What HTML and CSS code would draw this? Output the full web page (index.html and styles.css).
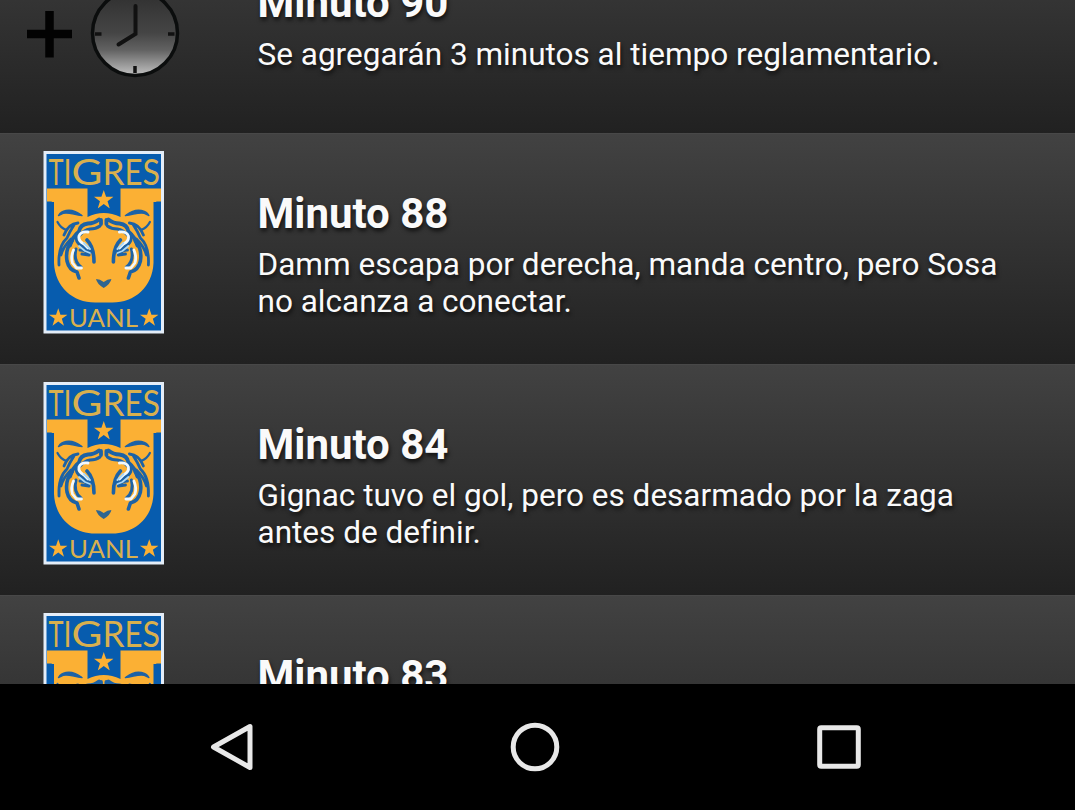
FILE: index.html
```html
<!DOCTYPE html>
<html lang="es">
<head>
<meta charset="utf-8">
<title>Minuto a minuto</title>
<link rel="stylesheet" href="styles.css">
</head>
<body>
<svg class="defs" aria-hidden="true">
  <symbol id="star" viewBox="0 0 20 19"><path d="M10 0l2.4 7H20l-6.1 4.5L16.2 19 10 14.5 3.8 19l2.3-7.5L0 7h7.6z"/></symbol>
  <g id="half-face" fill="none" stroke="#1c62a6" stroke-width="2.8" stroke-linecap="round" stroke-linejoin="round">
    <path d="M58.500 215.500C60 213 63 211 66 210.500c7-1 11 1.500 16 5-7-.5-10-2.500-16-2.500-4 0-5 1.500-7.500 2.500z" fill="#1c62a6" stroke-width="1.400"/>
    <path d="M57.500 222q3 6 9 8" stroke-width="2.200"/>
    <path d="M78 223q-10 1-14 12M74 225q-4 6-7 13-9 8-8 27M71 239q-8 8-10 16"/>
    <path d="M101 220v4M99 219.500q-5 4-11 4-8 1-9 8-7 6-9 14" stroke-width="3.800"/>
    <path d="M100 226q-4 3-10 3-6 1-10 6" stroke-width="3"/>
    <path d="M77 234q-2 8 5 12l8 6M87 240q7 7 7 22M72 241q-7 8-5 20 2 9 10 11l2 6" stroke-width="3.600"/>
    <path d="M76 249q-3 12 5 18M80 250q6 0 9 5l-7-1" stroke-width="3"/>
    <path d="M88 232q-7-1-9 4-1 5 5 8l4 4M73.500 250q-3 7-1 13l4 5 5 0" stroke="#f1f9ff" stroke-width="2.800"/>
    <path d="M79 246l6 5 5 2M84 243l6 6" stroke="#a9d7f5" stroke-width="1.800"/>
  </g>
  <symbol id="crest" viewBox="43 150 122 185">
    <rect x="43.500" y="151" width="120.500" height="182.500" fill="#e4edf8"/>
    <rect x="46.500" y="154" width="114.500" height="176.500" fill="#075cae"/>
    <path d="M47 188.500h40.500V217q16-8 33 0v-28.500H161V202h-7.500v61c-1 24-19 39.500-41 39.500H95C73 302.500 55 287 54 263v-61h-7z" fill="#fbb034"/>
    <path d="M47 201.500h4.500l2.500 2.500v56h-7zM161 201.500h-4.500l-2.500 2.500v56h7z" fill="#075cae"/>
    <use href="#half-face"/>
    <use href="#half-face" transform="translate(207.400 0) scale(-1 1)"/>
    <path d="M96 279q4 0 7.700 3 3.700-3 7.700-3-1 5-7.700 9-6.700-4-7.700-9z" fill="#30658f"/>
    <use href="#star" x="94" y="190" width="19.500" height="18.500" fill="#fbb034"/>
    <use href="#star" x="49" y="307.500" width="18.500" height="19" fill="#fbb034"/>
    <use href="#star" x="140" y="307.500" width="18.500" height="19" fill="#fbb034"/>
    <text class="crest-name" y="184.500"><tspan x="48.500" textLength="15" lengthAdjust="spacingAndGlyphs">T</tspan><tspan x="63.500" textLength="8" lengthAdjust="spacingAndGlyphs">I</tspan><tspan x="71.500" textLength="31" lengthAdjust="spacingAndGlyphs">G</tspan><tspan x="102.500" textLength="22" lengthAdjust="spacingAndGlyphs">R</tspan><tspan x="124.500" textLength="18" lengthAdjust="spacingAndGlyphs">E</tspan><tspan x="142.500" textLength="17.500" lengthAdjust="spacingAndGlyphs">S</tspan></text>
    <text class="crest-school" x="69" y="326.500" textLength="69" lengthAdjust="spacingAndGlyphs">UANL</text>
  </symbol>
</svg>
<div class="screen">
  <main class="feed">
    <article class="event">
      <svg class="added-time" viewBox="24 -14 158 94">
        <defs><linearGradient id="dial" x1="0" y1="0" x2="0" y2="1"><stop offset=".1" stop-color="#333"/><stop offset=".5" stop-color="#454545"/><stop offset=".7" stop-color="#626262"/><stop offset="1" stop-color="#c2c2c2"/></linearGradient></defs>
        <path d="M27 34h45M49.500 11v46.500" stroke="#020202" stroke-width="8.500"/>
        <circle cx="135" cy="33" r="42.500" fill="url(#dial)" stroke="#0b0d0d" stroke-width="3.500"/>
        <path d="M95 34h6.500M168 34h6.500M135 66v7M135-6v6" stroke="#111" stroke-width="3.500"/>
        <path d="M135.500 6v28l-17 10.500" fill="none" stroke="#111" stroke-width="4" stroke-linecap="round"/>
      </svg>
      <div class="copy"><h2>Minuto 90</h2><p>Se agregarán 3 minutos al tiempo reglamentario.</p></div>
    </article>
    <article class="event">
      <svg class="crest"><use href="#crest"/></svg>
      <div class="copy"><h2>Minuto 88</h2><p>Damm escapa por derecha, manda centro, pero Sosa<br>no alcanza a conectar.</p></div>
    </article>
    <article class="event">
      <svg class="crest"><use href="#crest"/></svg>
      <div class="copy"><h2>Minuto 84</h2><p>Gignac tuvo el gol, pero es desarmado por la zaga<br>antes de definir.</p></div>
    </article>
    <article class="event">
      <svg class="crest"><use href="#crest"/></svg>
      <div class="copy"><h2>Minuto 83</h2></div>
    </article>
  </main>
  <nav class="navbar">
    <svg class="nav-icon back" viewBox="0 0 60 60"><path d="M50 9.500v41L13.500 30z"/></svg>
    <svg class="nav-icon home" viewBox="0 0 60 60"><circle cx="30" cy="30" r="21.800"/></svg>
    <svg class="nav-icon recent" viewBox="0 0 60 60"><rect x="10.700" y="10.700" width="38.600" height="38.600" rx="1.500"/></svg>
  </nav>
</div>
</body>
</html>
```
FILE: styles.css
```css
* { box-sizing: border-box; }
body { margin: 0; background: #000; font-family: Roboto, sans-serif; font-variant-ligatures: none; }
.defs { display: block; width: 0; height: 0; }
.screen { display: flex; flex-direction: column; width: 1075px; height: 810px; overflow: hidden; }
.feed { height: 684px; overflow: hidden; display: flex; flex-direction: column; }
.event {
  flex: 0 0 231px;
  display: grid;
  grid-template-columns: 214.5px 1fr;
  padding: 16px 0 0 43px;
  border-top: 1px solid #484848;
  background: linear-gradient(#424242, #212121);
}
.event:first-child { margin-top: -98px; }
.event:first-child .copy { padding-top: 60px; }
.event:first-child h2 { margin-top: -1px; margin-bottom: 8px; }
.crest { display: block; width: 122px; height: 185px; }
.added-time { width: 158px; height: 94px; margin: 67px 0 0 -19px; }
.copy { padding-top: 39px; color: #fafafa; text-shadow: 1px 3px 4px rgba(0, 0, 0, .7); white-space: nowrap; }
.copy h2 { margin: 0; font-size: 42px; line-height: 50px; font-weight: 700; }
.copy p { margin: 7px 0 0; font-size: 31.52px; line-height: 37px; }
.crest-name, .crest-school { font-family: Lato, sans-serif; fill: #d9b04e; }
.crest-name { font-size: 36px; }
.crest-school { font-size: 25px; }
.navbar { height: 126px; display: flex; align-items: center; background: #000; padding-left: 200px; }
.nav-icon { width: 60px; height: 60px; fill: none; stroke: #e8e8e8; stroke-width: 5; stroke-linejoin: round; }
.home { margin-left: 245px; }
.recent { margin-left: 244px; }
```
